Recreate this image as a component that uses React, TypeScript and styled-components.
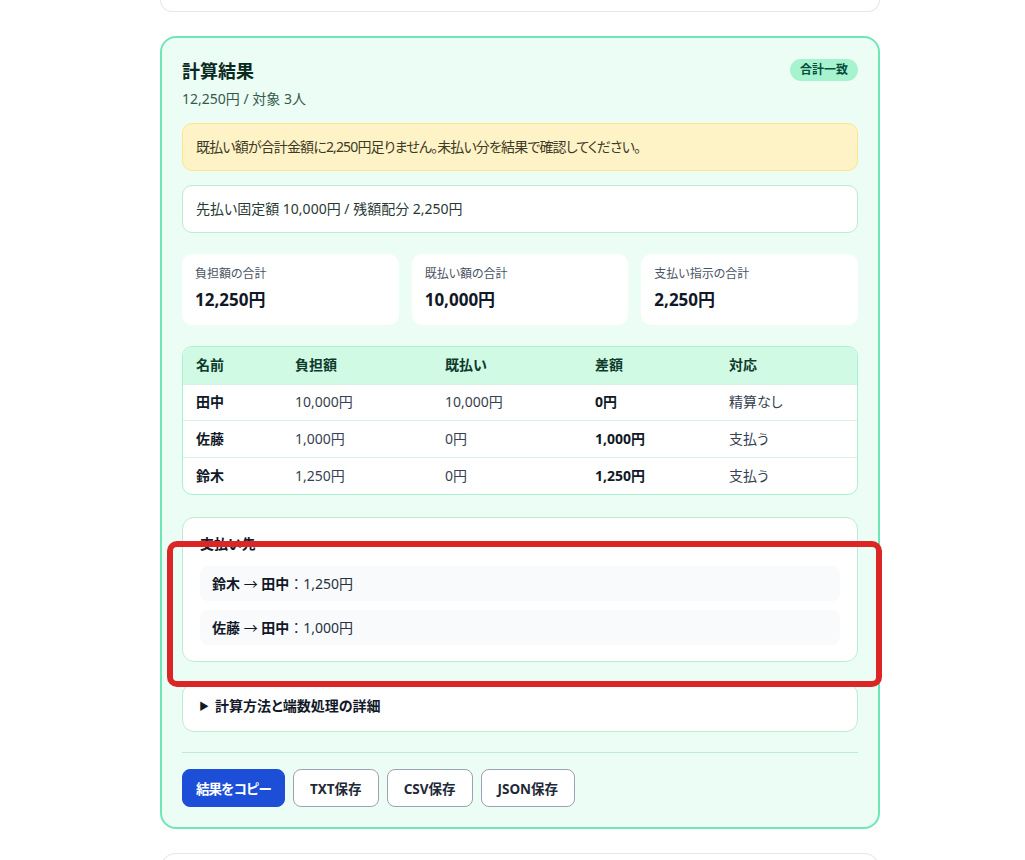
import styled, { createGlobalStyle } from "styled-components";

const GlobalStyle = createGlobalStyle`
	* { box-sizing: border-box; }
	body {
		margin: 0;
		background: #ffffff;
		font-family: "Noto Sans", "Noto Sans CJK JP", sans-serif;
		font-feature-settings: "palt" 1;
		color: #1f2937;
	}
`;

const Page = styled.div`
	width: 720px;
	margin-left: 160px;
	display: flex;
	flex-direction: column;
`;

const PrevCard = styled.div`
	height: 12px;
	border: 1px solid #e5e7eb;
	border-top: none;
	border-radius: 0 0 16px 16px;
	background: #fff;
`;

const NextCard = styled.div`
	height: 40px;
	margin-top: 24px;
	border: 1px solid #e5e7eb;
	border-bottom: none;
	border-radius: 16px 16px 0 0;
	background: #fff;
`;

const ResultCard = styled.section`
	margin-top: 24px;
	border: 2px solid #6ee7b7;
	border-radius: 16px;
	background: #ecfdf5;
	padding: 20px 20px 20px;
	display: flex;
	flex-direction: column;
`;

const Header = styled.div`
	display: flex;
	justify-content: space-between;
	align-items: flex-start;
`;

const Title = styled.h2`
	margin: 0;
	font-size: 18px;
	line-height: 26px;
	font-weight: 700;
	color: #0b2a1f;
`;

const Sub = styled.p`
	margin: 5px 0 0;
	font-size: 14px;
	line-height: 20px;
	color: #36594d;
`;

const Badge = styled.span`
	margin-top: 1px;
	padding: 2px 10px;
	border-radius: 999px;
	background: #a7f3d0;
	color: #064e3b;
	font-size: 12px;
	line-height: 18px;
	font-weight: 700;
`;

const Notice = styled.div<{ $tone: "warn" | "plain" }>`
	margin-top: 14px;
	padding: 13px 13px;
	border-radius: 10px;
	border: 1px solid ${(p) => (p.$tone === "warn" ? "#fde68a" : "#bdebd6")};
	background: ${(p) => (p.$tone === "warn" ? "#fef3c7" : "#ffffff")};
	color: ${(p) => (p.$tone === "warn" ? "#3d3a26" : "#273a33")};
	font-size: 14px;
	line-height: 20px;
	letter-spacing: ${(p) => (p.$tone === "warn" ? "-0.85px" : "0")};
`;

const Stats = styled.div`
	margin-top: 21px;
	display: grid;
	grid-template-columns: repeat(3, 1fr);
	gap: 13px;
`;

const Stat = styled.div`
	background: #ffffff;
	border-radius: 10px;
	padding: 12px 13px;
`;

const StatLabel = styled.div`
	font-size: 12px;
	line-height: 16px;
	color: #4b5563;
`;

const StatValue = styled.div`
	margin-top: 5px;
	font-size: 17px;
	line-height: 26px;
	font-weight: 700;
	color: #111827;
`;

const TableWrap = styled.div`
	margin-top: 21px;
	border: 1px solid #a7f3d0;
	border-radius: 10px;
	overflow: hidden;
	background: #fff;
`;

const Table = styled.table`
	width: 100%;
	border-collapse: collapse;
	table-layout: fixed;
	font-size: 14px;
	line-height: 20px;
`;

const Th = styled.th`
	height: 37px;
	text-align: left;
	padding: 0 13px;
	background: #d1fae5;
	color: #0f3b2c;
	font-weight: 700;
`;

const Td = styled.td<{ $strong?: boolean }>`
	height: 36.7px;
	padding: 0 13px;
	border-top: 1px solid #d9f3e7;
	color: ${(p) => (p.$strong ? "#111827" : "#374151")};
	font-weight: ${(p) => (p.$strong ? 700 : 400)};
`;

const PayBox = styled.div`
	position: relative;
	margin-top: 22px;
	padding: 16px 17px 16px;
	border: 1px solid #bdebd6;
	border-radius: 12px;
	background: #ffffff;
`;

const PayTitle = styled.h3`
	margin: 0 0 12px;
	font-size: 14px;
	line-height: 20px;
	font-weight: 700;
	color: #111827;
`;

const PayList = styled.div`
	display: flex;
	flex-direction: column;
	gap: 9px;
`;

const PayItem = styled.div`
	height: 35px;
	line-height: 35px;
	padding: 0 12px;
	border-radius: 8px;
	background: #f8fafc;
	font-size: 14px;
	color: #273140;
	font-feature-settings: normal;

	b {
		font-weight: 700;
		color: #111827;
	}
`;

const Arrow = styled.span`
	font-weight: 400;
	color: #111827;
`;

const Highlight = styled.div`
	position: absolute;
	left: -16px;
	right: -25px;
	top: 23px;
	bottom: -26px;
	border: 6px solid #dc2626;
	border-radius: 10px;
	pointer-events: none;
	z-index: 2;
`;

const Details = styled.details`
	margin-top: 21px;
	padding: 12px 16px 15px;
	border: 1px solid #bdebd6;
	border-radius: 12px;
	background: #ffffff;

	summary {
		display: flex;
		align-items: center;
		gap: 6px;
		font-size: 14px;
		line-height: 20px;
		font-weight: 700;
		color: #111827;
		cursor: pointer;
		list-style: none;
	}
	summary::-webkit-details-marker { display: none; }
`;

const Caret = styled.span`
	font-size: 10px;
	line-height: 20px;
`;

const Divider = styled.hr`
	margin: 20px 0 0;
	border: none;
	border-top: 1px solid #bfead7;
`;

const Actions = styled.div`
	margin-top: 16px;
	display: flex;
	gap: 8px;
`;

const Button = styled.button<{ $primary?: boolean }>`
	height: 38px;
	padding: 0 ${(p) => (p.$primary ? "13px" : "16px")};
	border-radius: 8px;
	font-family: inherit;
	font-size: 13.5px;
	font-weight: 700;
	letter-spacing: ${(p) => (p.$primary ? "-1px" : "0")};
	cursor: pointer;
	border: 1px solid ${(p) => (p.$primary ? "#1d4ed8" : "#9aa3b1")};
	background: ${(p) => (p.$primary ? "#1d4ed8" : "#ffffff")};
	color: ${(p) => (p.$primary ? "#ffffff" : "#1f2937")};
`;

const rows = [
	{ name: "田中", owe: "10,000円", paid: "10,000円", diff: "0円", action: "精算なし" },
	{ name: "佐藤", owe: "1,000円", paid: "0円", diff: "1,000円", action: "支払う" },
	{ name: "鈴木", owe: "1,250円", paid: "0円", diff: "1,250円", action: "支払う" },
];

const transfers = [
	{ from: "鈴木", to: "田中", amount: "1,250円" },
	{ from: "佐藤", to: "田中", amount: "1,000円" },
];

const App = () => {
	return (
		<>
			<GlobalStyle />
			<Page>
				<PrevCard />
				<ResultCard>
					<Header>
						<div>
							<Title>計算結果</Title>
							<Sub>12,250円 / 対象 3人</Sub>
						</div>
						<Badge>合計一致</Badge>
					</Header>

					<Notice $tone="warn">
						既払い額が合計金額に2,250円足りません。未払い分を結果で確認してください。
					</Notice>
					<Notice $tone="plain">先払い固定額 10,000円 / 残額配分 2,250円</Notice>

					<Stats>
						<Stat>
							<StatLabel>負担額の合計</StatLabel>
							<StatValue>12,250円</StatValue>
						</Stat>
						<Stat>
							<StatLabel>既払い額の合計</StatLabel>
							<StatValue>10,000円</StatValue>
						</Stat>
						<Stat>
							<StatLabel>支払い指示の合計</StatLabel>
							<StatValue>2,250円</StatValue>
						</Stat>
					</Stats>

					<TableWrap>
						<Table>
							<colgroup>
								<col style={{ width: 99 }} />
								<col style={{ width: 150 }} />
								<col style={{ width: 150 }} />
								<col style={{ width: 134 }} />
								<col />
							</colgroup>
							<thead>
								<tr>
									<Th>名前</Th>
									<Th>負担額</Th>
									<Th>既払い</Th>
									<Th>差額</Th>
									<Th>対応</Th>
								</tr>
							</thead>
							<tbody>
								{rows.map((r) => (
									<tr key={r.name}>
										<Td $strong>{r.name}</Td>
										<Td>{r.owe}</Td>
										<Td>{r.paid}</Td>
										<Td $strong>{r.diff}</Td>
										<Td>{r.action}</Td>
									</tr>
								))}
							</tbody>
						</Table>
					</TableWrap>

					<PayBox>
						<PayTitle>支払い先</PayTitle>
						<PayList>
							{transfers.map((t) => (
								<PayItem key={t.from}>
									<b>{t.from}</b> <Arrow>→</Arrow> <b>{t.to}</b>：{t.amount}
								</PayItem>
							))}
						</PayList>
						<Highlight />
					</PayBox>

					<Details>
						<summary>
							<Caret>▶</Caret>計算方法と端数処理の詳細
						</summary>
					</Details>

					<Divider />

					<Actions>
						<Button $primary>結果をコピー</Button>
						<Button>TXT保存</Button>
						<Button>CSV保存</Button>
						<Button>JSON保存</Button>
					</Actions>
				</ResultCard>
				<NextCard />
			</Page>
		</>
	);
};

export default App;
